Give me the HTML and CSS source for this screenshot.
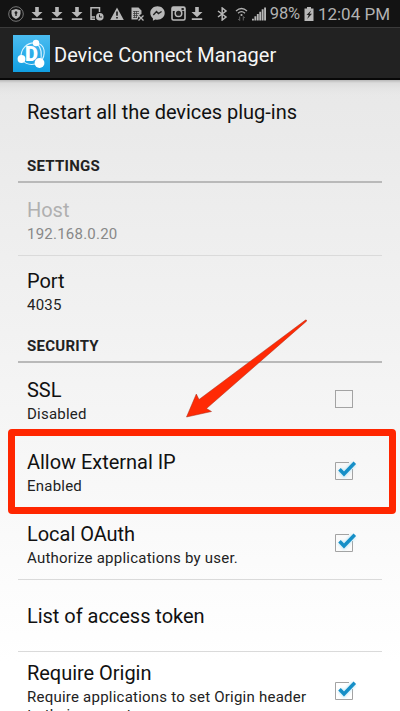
FILE: index.html
```html
<!DOCTYPE html>
<html lang="en">
<head>
<meta charset="utf-8">
<title>Device Connect Manager</title>
<link rel="stylesheet" href="styles.css">
</head>
<body>
<svg class="defs" width="0" height="0" aria-hidden="true">
  <symbol id="download" viewBox="0 0 12 14"><path d="M4.200 0h3.600v5H11.500L6 10.200 .5 5h3.700zM.8 11.300h10.400v1.700H.8z"/></symbol>
  <symbol id="checked" viewBox="0 0 28 28">
    <path d="M20.500 12V22.500H3.500V5.500H17" fill="none" stroke="#a3a3a3"/>
    <path class="glow" d="M8 12.700l4 4.300L22 6.500"/>
    <path d="M7.500 12.200l4.500 4.700L22.800 5.800" fill="none" stroke="#168fc7" stroke-width="3.500"/>
  </symbol>
</svg>
<div class="screen">
  <header class="status">
    <div class="notifications">
      <svg width="16" height="16" viewBox="0 0 16 16"><circle cx="8" cy="8" r="7.300" fill="none" stroke="#777" stroke-width="1"/><path d="M8 3l4.500 1.200v3.300c0 2.700-2 4.500-4.500 5.500-2.500-1-4.500-2.800-4.500-5.500V4.200z"/><path d="M8 5.200a1.500 1.500 0 0 1 .7 2.800v2H7.300V8A1.500 1.500 0 0 1 8 5.200" fill="#222"/></svg>
      <svg class="dl" width="12" height="14"><use href="#download"/></svg>
      <svg class="dl" width="12" height="14"><use href="#download"/></svg>
      <svg class="dl" width="12" height="14"><use href="#download"/></svg>
      <svg width="14" height="14" viewBox="0 0 14 14"><path d="M5 12.300H1V.8h8.500V5M1 10h4" fill="none" stroke="#b8b8b8" stroke-width="1.500"/><circle cx="9.800" cy="9.800" r="3.800"/><path d="M9.500 7.500V10H12" fill="none" stroke="#222"/></svg>
      <svg width="14" height="14" viewBox="0 0 14 14"><path d="M7 .5L13.800 13H.2z"/><path d="M7 4.500v4.300M7 10v1.500" stroke="#161616" stroke-width="1.600"/></svg>
      <svg width="14" height="14" viewBox="0 0 14 14"><path d="M1.500.5h7l3 3V7L9 8.500 7.500 12.500h-6z"/><path d="M3 4.500h6M3 6.500h6M3 8.500h5M3 10.500h4M4.500 4v7M6.500 4v7" stroke="#333" stroke-width=".7"/><path d="M8.500 8.500l5 5m0-5l-5 5" stroke="#b8b8b8" stroke-width="1.300"/></svg>
      <svg width="15" height="15" viewBox="0 0 15 15"><path d="M7.500.3C3.400.3.300 3.200.300 7c0 2.200 1 4 2.600 5.200v2.500l2.400-1.300c.7.200 1.400.3 2.200.3 4.100 0 7.200-2.900 7.200-6.700S11.600.3 7.500.3"/><path d="M3.300 8.900l3.200-3.300L8.400 7.500l3.200-2" fill="none" stroke="#222" stroke-width="1.400"/></svg>
      <svg width="15" height="15" viewBox="0 0 15 15"><rect x="1" y="1" width="13" height="13" rx="1.500" fill="none" stroke="#b8b8b8" stroke-width="1.600"/><path d="M1 1h13v4H1z"/><circle cx="7.500" cy="7.300" r="3.300" fill="#222" stroke="#b8b8b8" stroke-width="1.500"/><path d="M10.500 2h2.300v2.200h-2.300z" fill="#222"/></svg>
      <svg class="dl last-dl" width="12" height="14"><use href="#download"/></svg>
    </div>
    <div class="system">
      <svg class="bluetooth" width="11" height="14" viewBox="0 0 11 14"><path d="M1 4l8 6-3.800 3V1L9 4l-8 6" fill="none" stroke="#b8b8b8" stroke-width="1.500"/></svg>
      <svg width="13" height="14" viewBox="0 0 13 14"><path d="M1 4q5.500-5 11 0M3 6.200q3.500-3 7 0" fill="none" stroke="#b0b0b0" stroke-width="1.300"/><circle cx="6.500" cy="8" r="1.100"/><path d="M4.700 9.500v4M3.200 12l1.500 1.500M8.300 13.500v-4m0 0l1.500 1.500" fill="none" stroke="#666" stroke-width="1"/></svg>
      <svg width="14" height="14" viewBox="0 0 15 14"><path d="M0 12h2v2H0zM2.600 9.500h2V14h-2zM5.200 7h2v7h-2zM7.800 4.500h2V14h-2zM10.400 2h2v12h-2zM13 0h2v14h-2z"/></svg>
      <span class="percent">98%</span>
      <svg width="10" height="14" viewBox="0 0 10 14"><path d="M3 0h4v1.500h2.500V14H.5V1.500H3z"/><path d="M7.300 3.200L2.500 8h2.200l-1.500 4L8 6.800H5.500z" fill="#222"/></svg>
      <span class="clock">12:04 PM</span>
    </div>
  </header>
  <div class="titlebar">
    <svg class="logo" width="37" height="37" viewBox="0 0 37 37">
      <defs><linearGradient id="blue" x2="0" y2="1"><stop stop-color="#4bbcf0"/><stop offset="1" stop-color="#119fe2"/></linearGradient></defs>
      <path d="M0 0h37v37H0z" fill="url(#blue)"/>
      <g fill="none" stroke="#d8f2ff" stroke-width="1.100"><path d="M8 24C7 14 14 7 23 8s11 11 4 20"/><path d="M9 25q6 7 17 3M23 8q8 6 4 20"/></g>
      <text class="letter" x="12" y="26">D</text>
      <g fill="#fff"><circle cx="23" cy="8" r="3.200"/><circle cx="8.500" cy="24" r="3.900"/><circle cx="26.500" cy="28" r="4.900"/></g>
    </svg>
    <h1>Device Connect Manager</h1>
  </div>
  <main class="settings">
    <div class="row single first"><div class="title">Restart all the devices plug-ins</div></div>
    <h2 class="section">SETTINGS</h2>
    <div class="row disabled"><div class="text"><div class="title host">Host</div><div class="summary">192.168.0.20</div></div></div>
    <div class="row divided"><div class="text"><div class="title">Port</div><div class="summary">4035</div></div></div>
    <h2 class="section">SECURITY</h2>
    <div class="row"><div class="text"><div class="title">SSL</div><div class="summary">Disabled</div></div><span class="empty"></span></div>
    <div class="row target"><div class="text"><div class="title">Allow External IP</div><div class="summary">Enabled</div></div><svg class="check" width="28" height="28"><use href="#checked"/></svg><div class="highlight"></div>
      <svg class="arrow" width="122" height="101" viewBox="0 0 122 101"><path d="M.5 98L10.300 75l2.700 5.500L119.500 1q1.500-.4 1 1.200L20.500 89.500l5 3z" stroke="#a62c19" stroke-width=".5"/></svg>
    </div>
    <div class="row"><div class="text"><div class="title">Local OAuth</div><div class="summary">Authorize applications by user.</div></div><svg class="check" width="28" height="28"><use href="#checked"/></svg></div>
    <div class="row single divided"><div class="title">List of access token</div></div>
    <div class="row divided last"><div class="text"><div class="title">Require Origin</div><div class="summary">Require applications to set Origin header to their requests.</div></div><svg class="check" width="28" height="28"><use href="#checked"/></svg></div>
  </main>
</div>
</body>
</html>
```
FILE: styles.css
```css
* { box-sizing: border-box; }
body { margin: 0; font-family: Roboto, sans-serif; overflow: hidden; }
svg { display: block; flex: none; }
.defs { position: absolute; }
.screen { width: 400px; height: 711px; overflow: hidden; display: flex; flex-direction: column; background: #f4f4f4; }
.status { height: 27px; flex: none; display: flex; justify-content: space-between; align-items: center; background: #131313; color: #b2b2b2; padding: 0 10px 0 8px; white-space: nowrap; }
.status svg { fill: #b8b8b8; }
.notifications, .system { display: flex; align-items: center; }
.notifications { gap: 6px; }
.notifications .dl { margin: 0 1px; }
.notifications .last-dl { margin-left: -1px; }
.system { gap: 4px; }
.bluetooth { margin-right: 3px; }
.percent { font-size: 16.5px; letter-spacing: -.2px; }
.clock { font-size: 17px; }
.titlebar { height: 53px; flex: none; display: flex; align-items: center; gap: 4px; padding: 1px 13px 0; background: #222; border-top: 1px solid #3a3a3a; border-bottom: 2px solid #080808; }
.letter { font: 900 20px Roboto, sans-serif; fill: #fff; }
h1 { margin: 3px 0 0; font-size: 20px; font-weight: 400; color: #f6f6f6; }
.settings { flex: 1; padding: 0 18px; background: linear-gradient(#b8b8b8, #dcdcdc 3px, #e5e5e5 9px, transparent 15px), linear-gradient(#e8e8e8, #fff 88%); }
.row { height: 72px; display: flex; align-items: flex-start; justify-content: space-between; padding: 15px 26px 0 9px; position: relative; }
.row.single { align-items: center; padding-top: 0; }
.row.first { height: 65px; padding-bottom: 2px; }
.row.divided { border-top: 1px solid #dadada; }
.row.divided:not(.single) { padding-top: 13px; }
.title { font-size: 20px; letter-spacing: -.03px; line-height: 24px; color: #111; white-space: nowrap; }
.summary { font-size: 15px; letter-spacing: .23px; line-height: 18px; margin-top: 3px; color: #222; }
.disabled .title { color: #b0b0b0; }
.disabled .summary { color: #888; }
.section { height: 38px; margin: 0; padding: 11px 9px 0; border-bottom: 2px solid #b9b9b9; font-size: 15px; letter-spacing: .25px; line-height: 20px; font-weight: 700; color: #222; }
.row + .section { height: 36px; padding-top: 9px; }
.first + .section { height: 38px; padding-top: 11px; }
.empty { width: 18px; height: 18px; margin: 12px 3px 0 0; border: 1px solid #a3a3a3; }
.check { margin: 7px -4px 0 0; }
.glow { fill: none; stroke: #9adcf5; stroke-width: 6px; opacity: .45; filter: blur(1px); }
.highlight { position: absolute; left: -10px; top: -6px; width: 388px; height: 85px; border: 7px solid #ff2600; border-radius: 4px; }
.arrow { position: absolute; left: 168px; top: -116px; fill: #ff2a05; }
.row.divided.last { height: 90px; padding-top: 9px; }
.last .text { width: 290px; }
.last .check { margin-top: 16px; }
```
